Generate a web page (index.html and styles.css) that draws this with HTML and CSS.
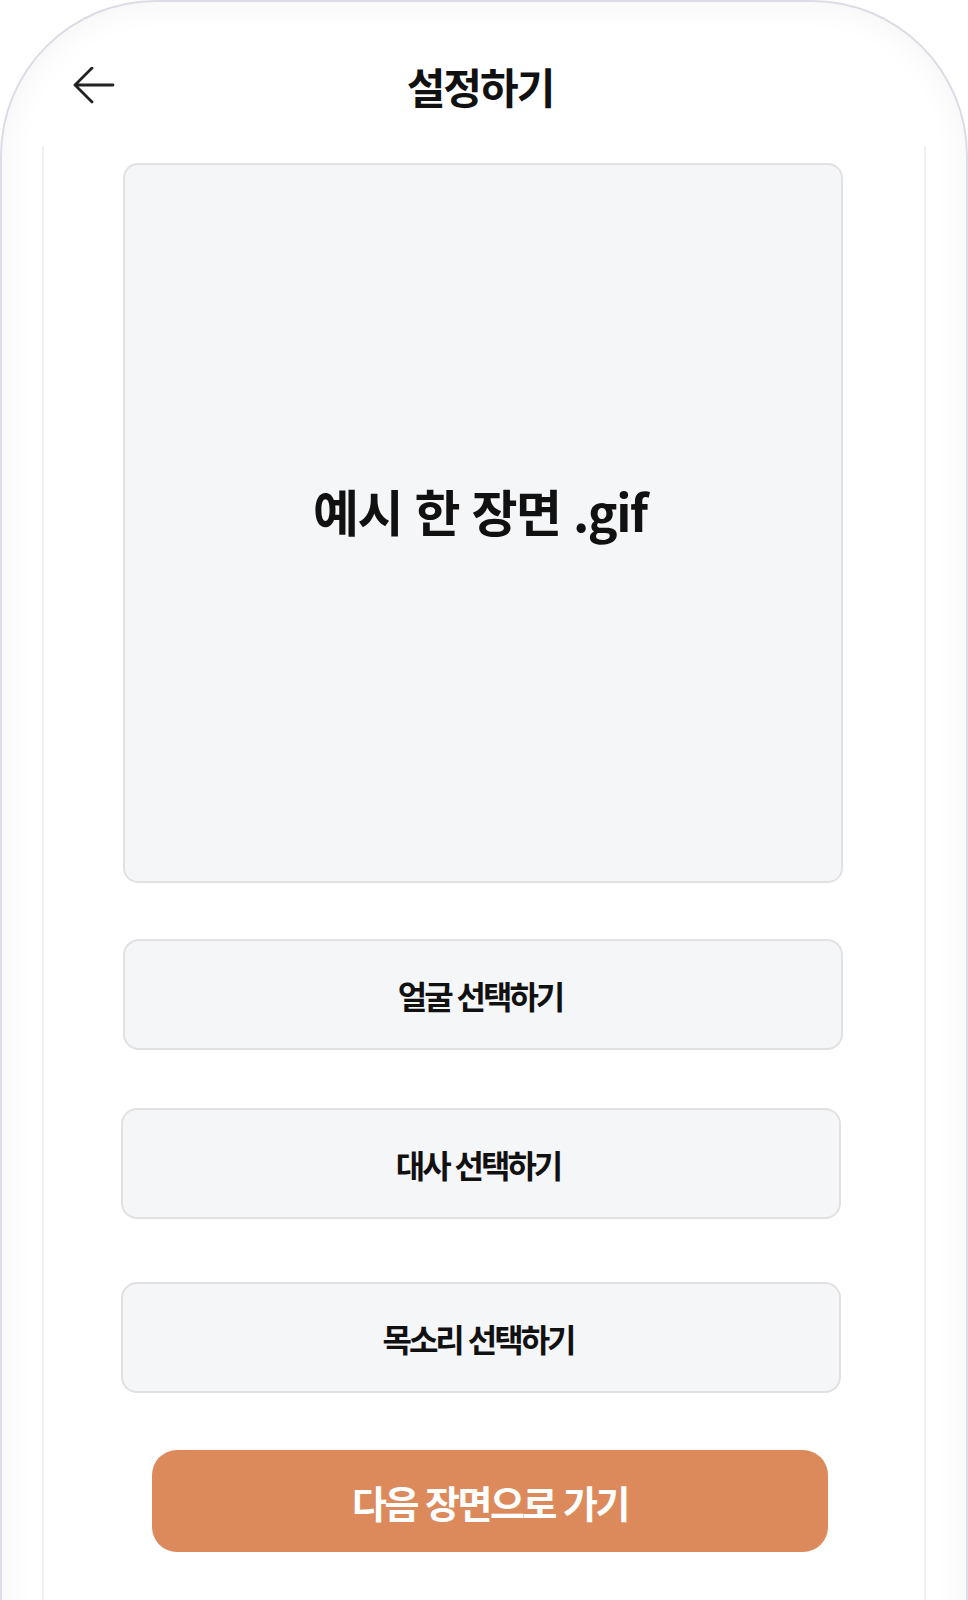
FILE: index.html
```html
<!DOCTYPE html>
<html lang="ko">
<head>
<meta charset="utf-8">
<title>설정하기</title>
<link rel="stylesheet" href="styles.css">
</head>
<body>
<div class="phone">
  <header class="header">
    <button class="back" aria-label="뒤로">
      <svg width="44" height="40" viewBox="0 0 44 40">
        <path d="M3 18 H41 M20 1 L3 18 L20 35" fill="none" stroke="#222" stroke-width="2.8" stroke-linecap="round" stroke-linejoin="round"/>
      </svg>
    </button>
    <h1 class="title">설정하기</h1>
    <span></span>
  </header>
  <main class="column">
    <div class="preview">예시 한 장면 .gif</div>
    <button class="option option-face">얼굴 선택하기</button>
    <button class="option option-line">대사 선택하기</button>
    <button class="option option-voice">목소리 선택하기</button>
    <button class="next">다음 장면으로 가기</button>
  </main>
</div>
</body>
</html>
```

FILE: styles.css
```css
* { box-sizing: border-box; }
html, body {
  margin: 0;
  padding: 0;
  background: #ffffff;
}
body {
  font-family: "Noto Sans CJK KR", "Noto Sans", sans-serif;
  color: #111;
  overflow: hidden;
}
.phone {
  width: 968px;
  min-height: 1640px;
  border: 2px solid #dcdce6;
  border-bottom: none;
  border-radius: 156px 156px 0 0;
  background: #fff;
  box-shadow: inset 0 0 30px 4px rgba(0, 0, 0, 0.045);
  display: flex;
  flex-direction: column;
}
.header {
  height: 144px;
  padding-top: 24px;
  display: grid;
  grid-template-columns: 1fr auto 1fr;
  align-items: center;
}
.back {
  justify-self: start;
  margin-left: 70px;
  padding: 0;
  border: none;
  background: none;
  display: flex;
  margin-top: 2px;
}
.title {
  margin: 0 8px 0 0;
  font-size: 42px;
  font-weight: 700;
  letter-spacing: -2px;
  line-height: 1;
}
.column {
  flex: 1;
  margin: 0 40px;
  border-left: 2px solid #f0f0f2;
  border-right: 2px solid #f0f0f2;
  background: #fff;
  display: flex;
  flex-direction: column;
  align-items: center;
  padding-top: 17px;
}
.preview {
  width: 720px;
  height: 720px;
  margin-right: 2px;
  border: 2px solid #e1e1e4;
  border-radius: 15px;
  background: #f5f6f8;
  display: flex;
  align-items: center;
  justify-content: center;
  padding: 0 6px 26px 0;
  font-size: 50px;
  font-weight: 700;
  letter-spacing: -1.5px;
}
.option {
  width: 720px;
  height: 111px;
  border: 2px solid #e1e1e4;
  border-radius: 16px;
  background: #f5f6f8;
  font-family: inherit;
  font-size: 32px;
  font-weight: 700;
  letter-spacing: -3px;
  color: #111;
  padding: 0 6px 0 0;
}
.option-face { margin-top: 56px; margin-right: 2px; }
.option-line { margin-top: 58px; margin-right: 6px; }
.option-voice { margin-top: 63px; margin-right: 6px; }
.next {
  width: 676px;
  height: 102px;
  margin-top: 57px;
  margin-left: 12px;
  border: none;
  border-radius: 25px;
  background: #dc8a5c;
  color: #fff;
  font-family: inherit;
  font-size: 38px;
  font-weight: 700;
  letter-spacing: -2.5px;
}
```
